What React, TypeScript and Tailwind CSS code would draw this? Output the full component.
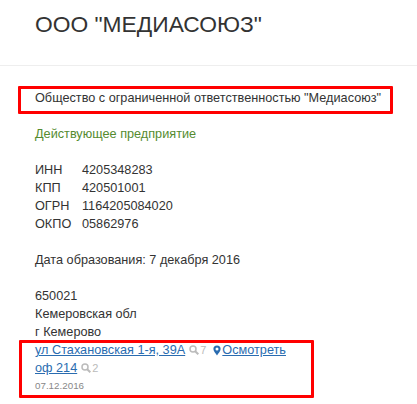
const codes = [
  { label: 'ИНН', value: '4205348283' },
  { label: 'КПП', value: '420501001' },
  { label: 'ОГРН', value: '1164205084020' },
  { label: 'ОКПО', value: '05862976' },
];

function SearchCount({ count }: { count: number }) {
  return (
    <span className="ml-[4px] inline-flex items-center text-[11px] text-[#bbbbbb]">
      <svg width="10" height="10" viewBox="0 0 10 10" fill="none" stroke="#bbbbbb">
        <circle cx="4" cy="4" r="3" strokeWidth="1.5" />
        <path d="M6.2 6.2 9.3 9.3" strokeWidth="2" />
      </svg>
      <span className="ml-[1px]">{count}</span>
    </span>
  );
}

function Pin() {
  return (
    <svg width="8" height="11" viewBox="0 0 8 11" className="mr-[1px] inline-block">
      <path
        fillRule="evenodd"
        d="M4 0.5a3.6 3.6 0 0 1 3.6 3.6C7.600 6.200 5 9 4 10.500 3 9 0.400 6.200 0.400 4.100A3.600 3.600 0 0 1 4 0.500ZM4 2.600a1.500 1.500 0 1 0 0 3 1.500 1.500 0 0 0 0-3Z"
        fill="#2a6cb0"
      />
    </svg>
  );
}

export default function App() {
  return (
    <div className="relative h-[404px] w-[417px] overflow-hidden bg-white font-['Liberation_Sans',Arial,sans-serif] text-[12.7px] leading-[18px] text-[#333333]">
      <div className="h-[66px] border-b border-[#eeeeee] pl-[35px] pt-[9px]">
        <h1 className="text-[22.8px] font-normal leading-[30px]">ООО "МЕДИАСОЮЗ"</h1>
      </div>

      <div className="pl-[35px] pt-[23px]">
        <div>Общество с ограниченной ответственностью "Медиасоюз"</div>
        <div className="mt-[18px] text-[#558b2f]">Действующее предприятие</div>

        <div className="mt-[18px] grid grid-cols-[47px_1fr]">
          {codes.map((row) => (
            <div key={row.label} className="contents">
              <span>{row.label}</span>
              <span>{row.value}</span>
            </div>
          ))}
        </div>

        <div className="mt-[18px]">Дата образования: 7 декабря 2016</div>

        <div className="mt-[18px]">
          <div>650021</div>
          <div>Кемеровская обл</div>
          <div>г Кемерово</div>
          <div className="flex items-center">
            <a className="text-[#2a6cb0] underline">ул Стахановская 1-я, 39А</a>
            <SearchCount count={7} />
            <span className="ml-[7px] flex items-center">
              <Pin />
              <a className="text-[#2a6cb0] underline">Осмотреть</a>
            </span>
          </div>
          <div className="flex items-center">
            <a className="text-[#2a6cb0] underline">оф 214</a>
            <SearchCount count={2} />
          </div>
          <div className="text-[9.8px] text-[#888888]">07.12.2016</div>
        </div>
      </div>

      {/* red annotation frames drawn over the page */}
      <div className="absolute left-[18px] top-[86px] h-[28px] w-[375px] rounded-[1px] border-[3px] border-[#ff0000]" />
      <div className="absolute left-[19px] top-[340px] h-[58px] w-[295px] rounded-[1px] border-[3px] border-[#ff0000]" />
    </div>
  );
}
